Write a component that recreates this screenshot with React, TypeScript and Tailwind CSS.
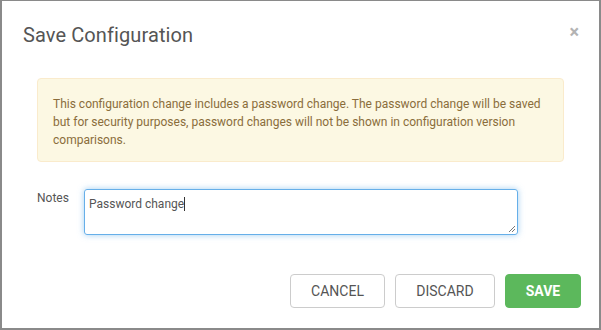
export default function App() {
  return (
    <div
      className="w-[601px] h-[330px] bg-white border-t border-l-2 border-r-2 border-b-2 border-[#8a8a8a] flex flex-col text-[#555]"
      style={{ fontFamily: "Roboto, 'Liberation Sans', sans-serif" }}
    >
      {/* Header */}
      <div className="flex items-start justify-between pl-[21px] pr-[20px] pt-[20px]">
        <h2 className="text-[20px] leading-[28px] font-normal text-[#555] tracking-[0.1px]">Save Configuration</h2>
        <button className="text-[#b3b3b3] text-[18px] leading-[18px] font-bold mt-[2px]">×</button>
      </div>

      {/* Body */}
      <div className="px-[35px] mt-[29px]">
        <div className="bg-[#fcf8e3] border border-[#faebcc] rounded-[4px] pl-[15px] pr-[14px] pt-[16px] pb-[12px] text-[12px] leading-[18px] text-[#8a6d3b]">
          This configuration change includes a password change. The password change will be saved but for
          security purposes, password changes will not be shown in configuration version comparisons.
        </div>

        <div className="flex mt-[27px]">
          <label className="w-[47px] text-[12px] leading-[14px] pt-[2px] text-[#555]">Notes</label>
          <div className="relative w-[434px] h-[46px] border border-[#66afe9] rounded-[3px] shadow-[0_0_6px_rgba(102,175,233,0.6)] px-[4px] pt-[7px] text-[12px] leading-[14px] text-[#555]">
            Password change
            <span className="inline-block w-px h-[14px] bg-[#333] align-top" />
            <svg className="absolute right-[1px] bottom-[1px]" width="9" height="9" viewBox="0 0 9 9">
              <path d="M8 2 L2 8 M8 5 L5 8" stroke="#777" strokeWidth="1" />
            </svg>
          </div>
        </div>
      </div>

      {/* Footer */}
      <div className="flex justify-end gap-[10px] pr-[18px] mt-[39px]">
        <button className="w-[95px] h-[34px] border border-[#ccc] rounded-[4px] bg-white text-[14px] text-[#555]">
          CANCEL
        </button>
        <button className="w-[100px] h-[34px] border border-[#ccc] rounded-[4px] bg-white text-[14px] text-[#555]">
          DISCARD
        </button>
        <button className="w-[76px] h-[34px] border border-[#5cb85c] rounded-[4px] bg-[#5cb85c] text-[14px] font-bold text-white">
          SAVE
        </button>
      </div>
    </div>
  );
}
